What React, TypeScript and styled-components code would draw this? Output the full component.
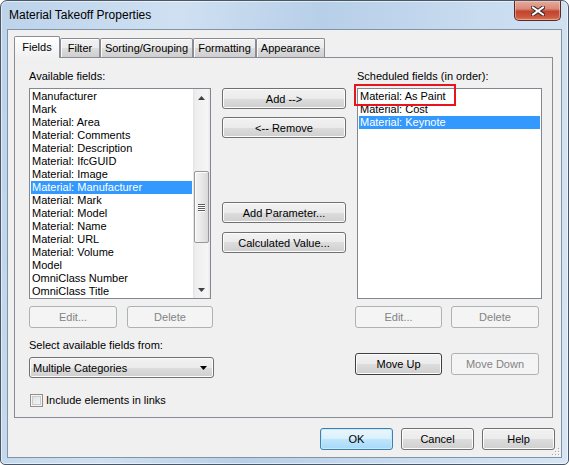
import React from "react";
import styled, { createGlobalStyle, css } from "styled-components";

const available = [
	"Manufacturer",
	"Mark",
	"Material: Area",
	"Material: Comments",
	"Material: Description",
	"Material: IfcGUID",
	"Material: Image",
	"Material: Manufacturer",
	"Material: Mark",
	"Material: Model",
	"Material: Name",
	"Material: URL",
	"Material: Volume",
	"Model",
	"OmniClass Number",
	"OmniClass Title",
];

const scheduled = ["Material: As Paint", "Material: Cost", "Material: Keynote"];

const tabs = [
	{ label: "Fields", width: 46 },
	{ label: "Filter", width: 40 },
	{ label: "Sorting/Grouping", width: 93 },
	{ label: "Formatting", width: 63 },
	{ label: "Appearance", width: 69 },
];

const GlobalStyle = createGlobalStyle`
	html, body {
		margin: 0;
		padding: 0;
		background: #ffffff;
	}
	body {
		font-family: "Liberation Sans", Arial, sans-serif;
		font-size: 11px;
		color: #000;
	}
`;

export default function App() {
	return (
		<>
			<GlobalStyle />
			<Window>
				<TitleBar>
					<Title>Material Takeoff Properties</Title>
					<CloseButton>
						<svg width="14" height="10" viewBox="0 0 14 10">
							<path d="M2 1.5 L12 8.5 M12 1.5 L2 8.5" stroke="#3b2a2a" strokeWidth="4" strokeLinecap="square" />
							<path d="M2 1.5 L12 8.5 M12 1.5 L2 8.5" stroke="#ffffff" strokeWidth="2" strokeLinecap="square" />
						</svg>
					</CloseButton>
				</TitleBar>

				<Client>
					<TabStrip>
						{tabs.map((t, i) => (
							<Tab key={t.label} $selected={i === 0} $width={t.width}>
								{t.label}
							</Tab>
						))}
					</TabStrip>

					<TabPanel>
						<Columns>
							<Column>
								<FieldLabel>Available fields:</FieldLabel>
								<ListBox $width={182} $mt={5}>
									<Items>
										{available.map((a) => (
											<Item key={a} $selected={a === "Material: Manufacturer"}>
												{a}
											</Item>
										))}
									</Items>
									<ScrollBar>
										<ScrollArrow>
											<svg width="7" height="4" viewBox="0 0 7 4">
												<path d="M0 4 L3.5 0 L7 4 Z" fill="#404040" />
											</svg>
										</ScrollArrow>
										<Track>
											<Thumb $top={65} $height={72}>
												<Grip>
													<span />
													<span />
													<span />
													<span />
												</Grip>
											</Thumb>
										</Track>
										<ScrollArrow>
											<svg width="7" height="4" viewBox="0 0 7 4">
												<path d="M0 0 L7 0 L3.5 4 Z" fill="#404040" />
											</svg>
										</ScrollArrow>
									</ScrollBar>
								</ListBox>
								<ButtonRow $mt={7} $gap={10}>
									<Button $width={88} $disabled>Edit...</Button>
									<Button $width={86} $disabled>Delete</Button>
								</ButtonRow>
								<FieldLabel $mt={11}>Select available fields from:</FieldLabel>
								<ComboBox>
									<span>Multiple Categories</span>
									<svg width="7" height="4" viewBox="0 0 7 4">
										<path d="M0 0 L7 0 L3.5 4 Z" fill="#000" />
									</svg>
								</ComboBox>
								<CheckRow>
									<CheckBox />
									<span>Include elements in links</span>
								</CheckRow>
							</Column>

							<Column $pt={18}>
								<Button $width={124} $height={21}>Add --&gt;</Button>
								<Button $width={124} $height={21} $mt={8}>&lt;-- Remove</Button>
								<Button $width={124} $height={21} $mt={64}>Add Parameter...</Button>
								<Button $width={124} $height={21} $mt={9}>Calculated Value...</Button>
							</Column>

							<Column>
								<FieldLabel $ml={2}>Scheduled fields (in order):</FieldLabel>
								<ListBox $width={185} $mt={5} $ml={2}>
									<Items>
										{scheduled.map((s) => (
											<Item key={s} $selected={s === "Material: Keynote"}>
												{s}
											</Item>
										))}
									</Items>
									<Highlight />
								</ListBox>
								<ButtonRow $mt={7} $gap={9}>
									<Button $width={87} $disabled>Edit...</Button>
									<Button $width={88} $disabled>Delete</Button>
								</ButtonRow>
								<ButtonRow $mt={25} $gap={9}>
									<Button $width={87} $variant="focus">Move Up</Button>
									<Button $width={88} $disabled>Move Down</Button>
								</ButtonRow>
							</Column>
						</Columns>
					</TabPanel>

					<Footer>
						<Button $width={73} $variant="default">OK</Button>
						<Button $width={73}>Cancel</Button>
						<Button $width={73}>Help</Button>
					</Footer>

					<SizeGrip>
						<svg width="10" height="10" viewBox="0 0 10 10">
							{[
								[8, 2],
								[5, 5],
								[8, 5],
								[2, 8],
								[5, 8],
								[8, 8],
							].map(([x, y]) => (
								<g key={`${x}-${y}`}>
									<rect x={x + 1} y={y + 1} width="1" height="1" fill="#ffffff" />
									<rect x={x} y={y} width="1" height="1" fill="#a0a7b0" />
								</g>
							))}
						</svg>
					</SizeGrip>
				</Client>
			</Window>
		</>
	);
}

const Window = styled.div`
	width: 569px;
	height: 465px;
	box-sizing: border-box;
	display: flex;
	flex-direction: column;
	padding: 0 6px 6px 6px;
	border: 1px solid #4a5766;
	border-radius: 7px 7px 5px 5px;
	background: linear-gradient(100deg, #bcd3ea 0%, #cfe0f2 28%, #b7cfe8 50%, #c9dcf0 75%, #d6e5f4 100%);
	box-shadow: inset 0 0 0 1px rgba(255, 255, 255, 0.55);
	overflow: hidden;
`;

const TitleBar = styled.div`
	height: 28px;
	display: flex;
	justify-content: space-between;
	align-items: flex-start;
`;

const Title = styled.div`
	padding-left: 2px;
	line-height: 28px;
	font-size: 12px;
	color: #000;
`;

const CloseButton = styled.div`
	width: 45px;
	height: 19px;
	margin-right: 1px;
	display: flex;
	align-items: center;
	justify-content: center;
	border: 1px solid #5a2a22;
	border-top: none;
	border-radius: 0 0 5px 5px;
	background: linear-gradient(#e9a99a 0%, #d88c7b 40%, #c2432e 55%, #cc5a3f 85%, #e07b5c 100%);
	box-shadow: inset 0 0 0 1px rgba(255, 220, 210, 0.45);
`;

const Client = styled.div`
	flex: 1;
	position: relative;
	display: flex;
	flex-direction: column;
	padding: 6px 8px 0 6px;
	border: 1px solid #8393a6;
	background: #f0f0f0;
`;

const TabStrip = styled.div`
	height: 22px;
	display: flex;
	align-items: flex-end;
	position: relative;
	z-index: 1;
`;

const Tab = styled.div<{ $selected?: boolean; $width: number }>`
	box-sizing: border-box;
	width: ${(p) => p.$width}px;
	height: 19px;
	margin-bottom: 1px;
	display: flex;
	align-items: center;
	justify-content: center;
	border: 1px solid #898c95;
	border-bottom: none;
	border-radius: 2px 2px 0 0;
	background: linear-gradient(#f2f2f2, #ebebeb 50%, #dddddd 50%, #cfcfcf);
	box-shadow: inset 1px 1px 0 #fcfcfc;
	white-space: nowrap;

	${(p) =>
		p.$selected &&
		css`
			height: 22px;
			margin-bottom: 0;
			background: linear-gradient(#ffffff, #f6f6f6 60%, #f0f0f0);
			box-shadow: none;
			padding-bottom: 2px;
		`}
`;

const TabPanel = styled.div`
	height: 361px;
	box-sizing: border-box;
	margin-top: -1px;
	padding: 12px 0 0 14px;
	border: 1px solid #898c95;
	background: #f0f0f0;
`;

const Columns = styled.div`
	display: grid;
	grid-template-columns: 193px 133px 187px;
`;

const Column = styled.div<{ $pt?: number }>`
	display: flex;
	flex-direction: column;
	align-items: flex-start;
	padding-top: ${(p) => p.$pt || 0}px;
`;

const FieldLabel = styled.div<{ $mt?: number; $ml?: number }>`
	height: 13px;
	line-height: 13px;
	margin-top: ${(p) => p.$mt || 0}px;
	margin-left: ${(p) => p.$ml || 0}px;
	white-space: nowrap;
`;

const ListBox = styled.div<{ $width: number; $mt?: number; $ml?: number }>`
	position: relative;
	box-sizing: border-box;
	width: ${(p) => p.$width}px;
	height: 211px;
	margin-top: ${(p) => p.$mt || 0}px;
	margin-left: ${(p) => p.$ml || 0}px;
	display: flex;
	border: 1px solid #828790;
	background: #ffffff;
`;

const Items = styled.div`
	flex: 1;
	padding-top: 1px;
	overflow: hidden;
`;

const Item = styled.div<{ $selected?: boolean }>`
	height: 13px;
	line-height: 13px;
	margin: 0 1px;
	padding-left: 1px;
	white-space: nowrap;
	background: ${(p) => (p.$selected ? "#3399ff" : "transparent")};
	color: ${(p) => (p.$selected ? "#ffffff" : "#000000")};
`;

const Highlight = styled.div`
	position: absolute;
	left: -4px;
	top: -5px;
	width: 102px;
	height: 22px;
	box-sizing: border-box;
	border: 2px solid #e8141c;
`;

const ScrollBar = styled.div`
	width: 17px;
	display: flex;
	flex-direction: column;
	background: linear-gradient(to right, #e3e3e3, #eeeeee 15%, #f5f5f5 85%, #e8e8e8);
`;

const ScrollArrow = styled.div`
	height: 17px;
	display: flex;
	align-items: center;
	justify-content: center;
`;

const Track = styled.div`
	flex: 1;
	display: flex;
	flex-direction: column;
	align-items: center;
`;

const Thumb = styled.div<{ $top: number; $height: number }>`
	box-sizing: border-box;
	width: 15px;
	height: ${(p) => p.$height}px;
	margin-top: ${(p) => p.$top}px;
	display: flex;
	align-items: center;
	justify-content: center;
	border: 1px solid #979797;
	border-radius: 2px;
	background: linear-gradient(to right, #f3f3f3, #e9e9e9 50%, #d8d8d8);
	box-shadow: inset 1px 1px 0 #fdfdfd;
`;

const Grip = styled.div`
	display: flex;
	flex-direction: column;
	gap: 1px;

	span {
		display: block;
		width: 7px;
		height: 1px;
		background: #5f5f5f;
		box-shadow: 0 1px 0 #ffffff;
	}
`;

const ButtonRow = styled.div<{ $mt?: number; $gap?: number }>`
	display: flex;
	gap: ${(p) => p.$gap || 8}px;
	margin-top: ${(p) => p.$mt || 0}px;
`;

const Button = styled.div<{
	$width: number;
	$height?: number;
	$mt?: number;
	$disabled?: boolean;
	$variant?: "default" | "focus";
}>`
	box-sizing: border-box;
	width: ${(p) => p.$width}px;
	height: ${(p) => p.$height || 22}px;
	margin-top: ${(p) => p.$mt || 0}px;
	display: flex;
	align-items: center;
	justify-content: center;
	border: 1px solid #707070;
	border-radius: 3px;
	background: linear-gradient(#f2f2f2, #ebebeb 50%, #dddddd 50%, #cfcfcf);
	box-shadow: inset 0 0 0 1px #fcfcfc;
	white-space: nowrap;
	color: #000;

	${(p) =>
		p.$variant === "focus" &&
		css`
			border-color: #3f3f3f;
		`}

	${(p) =>
		p.$variant === "default" &&
		css`
			border-color: #3c7fb1;
			background: linear-gradient(#eaf6fd, #d9f0fc 50%, #bee6fd 50%, #a7d9f5);
			box-shadow: inset 0 0 0 1px #c8e9f9;
		`}

	${(p) =>
		p.$disabled &&
		css`
			border-color: #adb2b5;
			background: #f4f4f4;
			box-shadow: none;
			color: #838383;
		`}
`;

const ComboBox = styled.div`
	box-sizing: border-box;
	width: 185px;
	height: 21px;
	margin-top: 5px;
	padding: 0 6px 0 3px;
	display: flex;
	align-items: center;
	justify-content: space-between;
	border: 1px solid #707070;
	border-radius: 3px;
	background: linear-gradient(#f2f2f2, #ebebeb 50%, #dddddd 50%, #cfcfcf);
	box-shadow: inset 0 0 0 1px #fcfcfc;
`;

const CheckRow = styled.div`
	display: flex;
	align-items: center;
	gap: 3px;
	margin-top: 16px;
	margin-left: 1px;
	line-height: 13px;
`;

const CheckBox = styled.div`
	box-sizing: border-box;
	width: 13px;
	height: 13px;
	border: 1px solid #8e8f8f;
	background: linear-gradient(135deg, #dcdcdc, #f9f9f9);
	box-shadow: inset 0 0 0 1px #f4f4f4, inset 0 0 0 2px #c9cbcd;
`;

const Footer = styled.div`
	display: flex;
	justify-content: flex-end;
	gap: 8px;
	margin: 10px -2px 0 0;
`;

const SizeGrip = styled.div`
	position: absolute;
	right: 1px;
	bottom: 1px;
	width: 10px;
	height: 10px;
	line-height: 0;
`;
